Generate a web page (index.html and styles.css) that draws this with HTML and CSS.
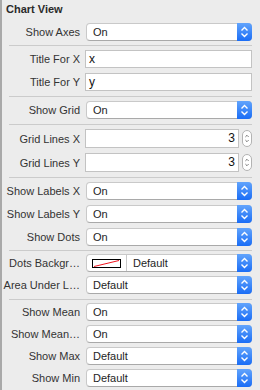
FILE: index.html
```html
<!DOCTYPE html>
<html lang="en">
<head>
    <meta charset="UTF-8">
    <meta name="viewport" content="width=device-width, initial-scale=1.0">
    <title>Chart View</title>
    <link rel="stylesheet" href="styles.css">
</head>
<body>
    <div class="inspector">
        <div class="section-title">Chart View</div>

        <!-- axes -->
        <div class="group first">
            <div class="row">
                <span class="label">Show Axes</span>
                <div class="popup"><span class="popup-value">On</span><span class="popup-arrows"><svg width="15" height="18" viewBox="0 0 15 18"><polyline points="4.5,7.5 7.5,4.5 10.5,7.5"/><polyline points="4.5,10.5 7.5,13.5 10.5,10.5"/></svg></span></div>
            </div>
        </div>
        <div class="divider"></div>

        <!-- titles -->
        <div class="group">
            <div class="row">
                <span class="label">Title For X</span>
                <div class="field">x</div>
            </div>
            <div class="row">
                <span class="label">Title For Y</span>
                <div class="field">y</div>
            </div>
        </div>
        <div class="divider"></div>

        <div class="group">
            <div class="row">
                <span class="label">Show Grid</span>
                <div class="popup"><span class="popup-value">On</span><span class="popup-arrows"><svg width="15" height="18" viewBox="0 0 15 18"><polyline points="4.5,7.5 7.5,4.5 10.5,7.5"/><polyline points="4.5,10.5 7.5,13.5 10.5,10.5"/></svg></span></div>
            </div>
        </div>
        <div class="divider"></div>

        <!-- grid lines with steppers -->
        <div class="group loose">
            <div class="row">
                <span class="label">Grid Lines X</span>
                <div class="number-box">
                    <div class="field number">3</div>
                    <span class="stepper"><svg width="10" height="17" viewBox="0 0 10 17"><polyline points="3,6.5 5,4.5 7,6.5"/><polyline points="3,10.5 5,12.5 7,10.5"/></svg></span>
                </div>
            </div>
            <div class="row">
                <span class="label">Grid Lines Y</span>
                <div class="number-box">
                    <div class="field number">3</div>
                    <span class="stepper"><svg width="10" height="17" viewBox="0 0 10 17"><polyline points="3,6.5 5,4.5 7,6.5"/><polyline points="3,10.5 5,12.5 7,10.5"/></svg></span>
                </div>
            </div>
        </div>
        <div class="divider"></div>

        <!-- labels and dots -->
        <div class="group short-end">
            <div class="row">
                <span class="label">Show Labels X</span>
                <div class="popup"><span class="popup-value">On</span><span class="popup-arrows"><svg width="15" height="18" viewBox="0 0 15 18"><polyline points="4.5,7.5 7.5,4.5 10.5,7.5"/><polyline points="4.5,10.5 7.5,13.5 10.5,10.5"/></svg></span></div>
            </div>
            <div class="row">
                <span class="label">Show Labels Y</span>
                <div class="popup"><span class="popup-value">On</span><span class="popup-arrows"><svg width="15" height="18" viewBox="0 0 15 18"><polyline points="4.5,7.5 7.5,4.5 10.5,7.5"/><polyline points="4.5,10.5 7.5,13.5 10.5,10.5"/></svg></span></div>
            </div>
            <div class="row">
                <span class="label">Show Dots</span>
                <div class="popup"><span class="popup-value">On</span><span class="popup-arrows"><svg width="15" height="18" viewBox="0 0 15 18"><polyline points="4.5,7.5 7.5,4.5 10.5,7.5"/><polyline points="4.5,10.5 7.5,13.5 10.5,10.5"/></svg></span></div>
            </div>
        </div>
        <div class="divider"></div>

        <div class="group tight">
            <div class="row">
                <span class="label">Dots Backgr…</span>
                <div class="popup">
                    <span class="well"><svg width="29" height="9" viewBox="0 0 29 9"><rect x="0.5" y="0.5" width="28" height="8" fill="#fff" stroke="#000"/><line x1="2" y1="7.5" x2="27" y2="1.5" stroke="#f0141e" stroke-width="1"/></svg></span>
                    <span class="popup-value">Default</span><span class="popup-arrows"><svg width="15" height="18" viewBox="0 0 15 18"><polyline points="4.5,7.5 7.5,4.5 10.5,7.5"/><polyline points="4.5,10.5 7.5,13.5 10.5,10.5"/></svg></span>
                </div>
            </div>
            <div class="row">
                <span class="label">Area Under L…</span>
                <div class="popup"><span class="popup-value">Default</span><span class="popup-arrows"><svg width="15" height="18" viewBox="0 0 15 18"><polyline points="4.5,7.5 7.5,4.5 10.5,7.5"/><polyline points="4.5,10.5 7.5,13.5 10.5,10.5"/></svg></span></div>
            </div>
        </div>
        <div class="divider"></div>

        <!-- mean / min / max -->
        <div class="group tight">
            <div class="row">
                <span class="label">Show Mean</span>
                <div class="popup"><span class="popup-value">On</span><span class="popup-arrows"><svg width="15" height="18" viewBox="0 0 15 18"><polyline points="4.5,7.5 7.5,4.5 10.5,7.5"/><polyline points="4.5,10.5 7.5,13.5 10.5,10.5"/></svg></span></div>
            </div>
            <div class="row">
                <span class="label">Show Mean…</span>
                <div class="popup"><span class="popup-value">On</span><span class="popup-arrows"><svg width="15" height="18" viewBox="0 0 15 18"><polyline points="4.5,7.5 7.5,4.5 10.5,7.5"/><polyline points="4.5,10.5 7.5,13.5 10.5,10.5"/></svg></span></div>
            </div>
            <div class="row">
                <span class="label">Show Max</span>
                <div class="popup"><span class="popup-value">Default</span><span class="popup-arrows"><svg width="15" height="18" viewBox="0 0 15 18"><polyline points="4.5,7.5 7.5,4.5 10.5,7.5"/><polyline points="4.5,10.5 7.5,13.5 10.5,10.5"/></svg></span></div>
            </div>
            <div class="row">
                <span class="label">Show Min</span>
                <div class="popup"><span class="popup-value">Default</span><span class="popup-arrows"><svg width="15" height="18" viewBox="0 0 15 18"><polyline points="4.5,7.5 7.5,4.5 10.5,7.5"/><polyline points="4.5,10.5 7.5,13.5 10.5,10.5"/></svg></span></div>
            </div>
        </div>
        <div class="divider"></div>
    </div>
</body>
</html>
```

FILE: styles.css
```css
/* whole panel */
html, body {
    margin: 0;
    height: 100%;
    background: #ececec;
}

.inspector {
    box-sizing: border-box;
    min-height: 100%;
    border-left: 2px solid #a9a9a9;
    padding: 0 8px 0 5px;
    font-family: "Liberation Sans", Arial, sans-serif;
    font-size: 11px;
    color: #2a2a2a;
}

.section-title {
    font-weight: bold;
    line-height: 14px;
    padding-top: 2px;
    margin-left: -1px;
    height: 17px;
}

/* groups of rows between the dividers */
.group {
    display: flex;
    flex-direction: column;
    gap: 5px;
    padding: 4px 0 5px;
}

.group.first {
    padding-bottom: 4px;
}

.group.loose {
    gap: 6px;
    padding-bottom: 6px;
}

.group.short-end {
    padding-bottom: 4px;
}

.group.tight {
    gap: 4px;
    padding-top: 3px;
}

.divider {
    height: 1px;
    margin-left: 2px;
    background: #cbcbcb;
}

.row {
    display: grid;
    grid-template-columns: 73px 1fr;
    column-gap: 5px;
    align-items: center;
    height: 18px;
}

/* long labels spill to the left, like right-aligned text */
.label {
    display: flex;
    justify-content: flex-end;
    white-space: nowrap;
    color: #333;
}

/* popup buttons */
.popup {
    display: flex;
    align-items: center;
    box-sizing: border-box;
    height: 18px;
    margin-left: 1px;
    background: #fff;
    border: 1px solid #c9c9c9;
    border-bottom-color: #a9a9a9;
    border-radius: 4px;
}

.popup-value {
    flex: 1;
    padding-left: 6px;
    color: #1e1e1e;
    white-space: nowrap;
}

.popup-arrows {
    display: flex;
    align-self: stretch;
    width: 15px;
    margin: -1px -1px -1px 0;
    border-radius: 0 4px 4px 0;
    background: linear-gradient(#62a4fc, #1a6df6);
}

.popup-arrows svg {
    display: block;
}

.popup-arrows polyline {
    fill: none;
    stroke: #fff;
    stroke-width: 1.4;
}

/* colour well in front of the popup */
.well {
    display: flex;
    align-items: center;
    justify-content: center;
    align-self: stretch;
    width: 39px;
    border-right: 1px solid #c9c9c9;
}

.well svg {
    display: block;
}

/* text fields */
.field {
    box-sizing: border-box;
    height: 18px;
    line-height: 16px;
    padding: 0 3px;
    background: #fff;
    border: 1px solid #c3c3c3;
    color: #111;
    font-size: 12px;
}

.number-box {
    display: flex;
    align-items: center;
    gap: 3px;
}

.field.number {
    flex: 1;
    text-align: right;
    height: 19px;
    line-height: 17px;
}

.stepper {
    box-sizing: border-box;
    width: 10px;
    height: 17px;
    background: #fff;
    border: 1px solid #b3b3b3;
    border-radius: 5px;
    display: flex;
    justify-content: center;
}

.stepper svg {
    display: block;
    margin-top: -1px;
}

.stepper polyline {
    fill: none;
    stroke: #555;
    stroke-width: 1;
}
```
